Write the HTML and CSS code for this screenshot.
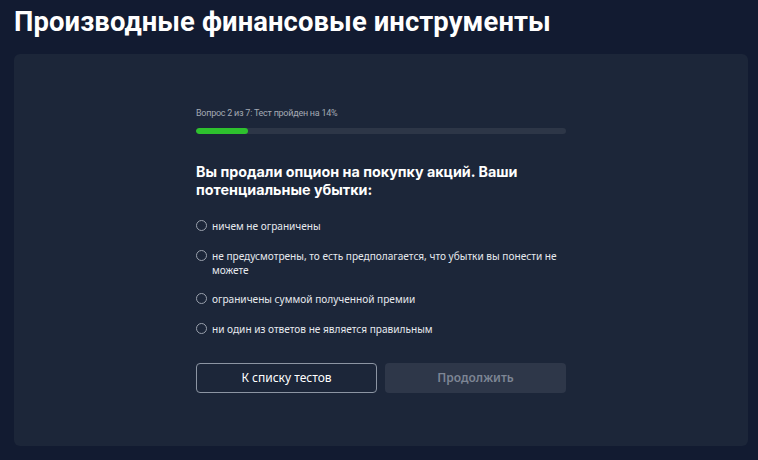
FILE: index.html
```html
<!DOCTYPE html>
<html lang="ru">
<head>
<meta charset="utf-8">
<link rel="stylesheet" href="styles.css">
</head>
<body>
<h1 class="title">Производные финансовые инструменты</h1>
<main class="card">
  <div class="quiz">
    <div class="progress-label">Вопрос 2 из 7: Тест пройден на 14%</div>
    <div class="progress"><div class="progress-fill" style="width:14%"></div></div>
    <h2 class="question">Вы продали опцион на покупку акций. Ваши потенциальные убытки:</h2>
    <ul class="options">
      <li class="option"><span class="radio"></span><span class="opt-text">ничем не ограничены</span></li>
      <li class="option"><span class="radio"></span><span class="opt-text">не предусмотрены, то есть предполагается, что убытки вы понести не можете</span></li>
      <li class="option"><span class="radio"></span><span class="opt-text">ограничены суммой полученной премии</span></li>
      <li class="option"><span class="radio"></span><span class="opt-text">ни один из ответов не является правильным</span></li>
    </ul>
    <div class="actions">
      <button class="btn btn-outline">К списку тестов</button>
      <button class="btn btn-disabled">Продолжить</button>
    </div>
  </div>
</main>
</body>
</html>
```
FILE: styles.css
```css
* { box-sizing: border-box; }
html, body { margin: 0; padding: 0; }
body {
  background: #121b31;
  width: 758px;
  height: 460px;
  overflow: hidden;
  font-family: "Noto Sans", "Open Sans", sans-serif;
  color: #ffffff;
  padding: 0 10px 0 14px;
}
.title {
  margin: 0;
  padding-top: 6px;
  height: 54px;
  font-family: Roboto, "Liberation Sans", sans-serif;
  font-weight: 700;
  font-size: 27.4px;
  line-height: 32px;
  letter-spacing: 0.1px;
}
.card {
  background: #1c2639;
  border-radius: 6px;
  width: 734px;
  height: 392px;
  display: flex;
  justify-content: center;
  padding-top: 53px;
}
.quiz {
  width: 370px;
  display: flex;
  flex-direction: column;
}
.progress-label {
  font-family: Roboto, "Liberation Sans", sans-serif;
  font-size: 9px;
  line-height: 12px;
  color: #a3a9b3;
  letter-spacing: -0.25px;
}
.progress {
  margin-top: 9px;
  height: 6px;
  background: #2d3647;
  border-radius: 3px;
  overflow: hidden;
}
.progress-fill {
  height: 100%;
  background: #2ec12e;
  border-radius: 3px;
}
.question {
  margin: 29px 0 0;
  font-family: Inter, "Noto Sans", sans-serif;
  font-weight: 700;
  font-size: 14.3px;
  line-height: 18px;
  color: #ffffff;
}
.options {
  list-style: none;
  margin: 20px 0 0;
  padding: 0;
  display: flex;
  flex-direction: column;
  gap: 15.5px;
}
.option {
  display: flex;
  align-items: flex-start;
  gap: 5px;
  font-size: 10.1px;
  line-height: 14px;
  color: #e6e9ee;
}
.radio {
  flex: none;
  width: 11px;
  height: 11px;
  margin-top: 1px;
  border: 1px solid #9aa1ad;
  border-radius: 50%;
}
.actions {
  margin-top: 27px;
  display: grid;
  grid-template-columns: 181px 181px;
  justify-content: space-between;
}
.btn {
  height: 30px;
  border-radius: 4px;
  font-family: "Noto Sans", sans-serif;
  font-size: 12px;
  padding: 0;
}
.btn-outline {
  background: transparent;
  border: 1px solid #8c95a3;
  color: #ffffff;
}
.btn-disabled {
  background: #2e3749;
  border: none;
  color: #7d8594;
  font-weight: 600;
}
```
